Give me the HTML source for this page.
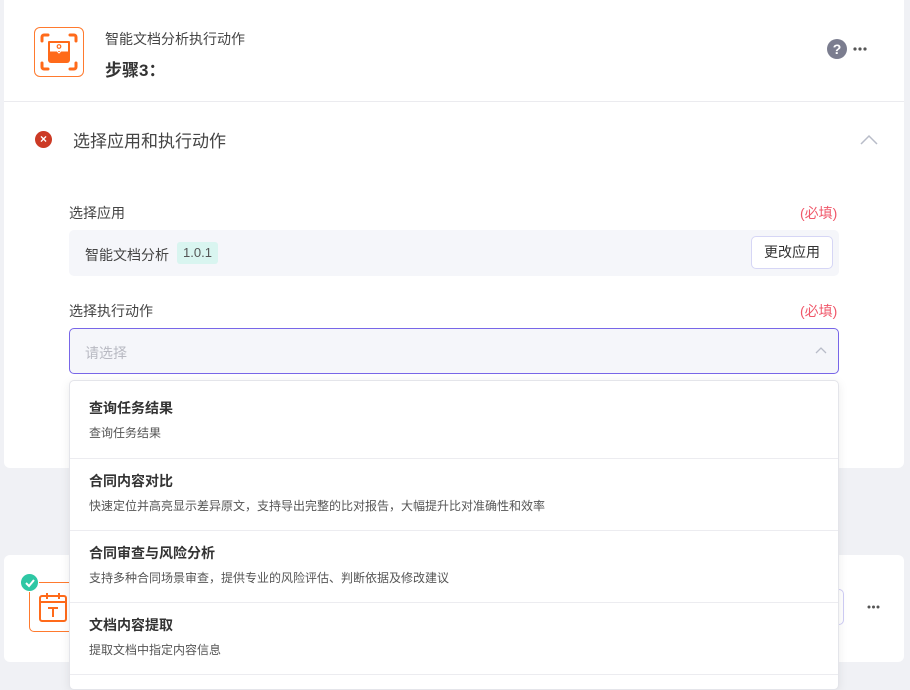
<!DOCTYPE html>
<html><head><meta charset="utf-8"><style>
*{margin:0;padding:0;box-sizing:border-box}
body{width:910px;height:681px;background:#f0f1f5;font-family:"Liberation Sans","Noto Sans CJK SC",sans-serif;position:relative;overflow:hidden;color:#333}
.abs{position:absolute}
.card{position:absolute;background:#fff;border-radius:6px}
</style></head><body>
<div class="card" style="left:4px;top:-6px;width:900px;height:474px"></div>
<div class="card" style="left:4px;top:555px;width:900px;height:107px"></div>

<!-- header icon -->
<div class="abs" style="left:34px;top:27px;width:50px;height:50px;border:1px solid #ff7a2e;border-radius:6px;background:#fff">
<svg width="50" height="50" viewBox="0 0 50 50" style="position:absolute;left:-1px;top:-1px">
<g fill="none" stroke="#ff6a1a" stroke-width="3" stroke-linecap="round">
<path d="M8 14V10a2 2 0 0 1 2-2h4M36 8h4a2 2 0 0 1 2 2v4M42 36v4a2 2 0 0 1-2 2h-4M14 42h-4a2 2 0 0 1-2-2v-4"/></g>
<path d="M15 14h20a1 1 0 0 1 1 1v18a3 3 0 0 1-3 3H17a3 3 0 0 1-3-3V15a1 1 0 0 1 1-1z" fill="#ff6a1a"/>
<rect x="16" y="16" width="18" height="8" fill="#fff"/>
<circle cx="25" cy="19.5" r="1.8" fill="none" stroke="#ff6a1a" stroke-width="1.2"/>
<path d="M16 24h7l2 2 2-2h7" stroke="#fff" fill="none"/>
</svg></div>
<div class="abs" style="left:105px;top:29px;font-size:14px;color:#444">智能文档分析执行动作</div>
<div class="abs" style="left:105px;top:56px;font-size:17px;font-weight:bold;color:#333">步骤3：</div>
<div class="abs" style="left:827px;top:39px;width:20px;height:20px;border-radius:50%;background:#7b7d8f;color:#fff;font-size:14px;font-weight:bold;text-align:center;line-height:20px">?</div>
<svg class="abs" style="left:853px;top:47px" width="14" height="4"><circle cx="2" cy="2" r="1.6" fill="#555"/><circle cx="7" cy="2" r="1.6" fill="#555"/><circle cx="12" cy="2" r="1.6" fill="#555"/></svg>
<div class="abs" style="left:4px;top:101px;width:900px;height:1px;background:#ebebef"></div>

<!-- section -->
<div class="abs" style="left:35px;top:131px;width:17px;height:17px;border-radius:50%;background:#cc3a25;color:#fff;font-size:12px;text-align:center;line-height:17px;font-weight:bold">×</div>
<div class="abs" style="left:73px;top:127px;font-size:17px;color:#444">选择应用和执行动作</div>
<svg class="abs" style="left:860px;top:134px" width="18" height="12"><path d="M1 10L9 2l8 8" stroke="#b8bcc8" stroke-width="1.5" fill="none"/></svg>

<div class="abs" style="left:69px;top:203px;font-size:14px;color:#444">选择应用</div>
<div class="abs" style="left:800px;top:203px;font-size:14px;color:#f0586a">(必填)</div>
<div class="abs" style="left:69px;top:230px;width:770px;height:46px;background:#f5f6fa;border-radius:5px"></div>
<div class="abs" style="left:85px;top:245px;font-size:14px;color:#444">智能文档分析</div>
<div class="abs" style="left:177px;top:242px;width:41px;height:22px;background:#d9f5f0;border-radius:3px;font-size:13px;color:#555;text-align:center;line-height:22px">1.0.1</div>
<div class="abs" style="left:751px;top:236px;width:82px;height:33px;background:#fff;border:1px solid #d6d6f5;border-radius:5px;font-size:14px;color:#333;text-align:center;line-height:31px">更改应用</div>

<div class="abs" style="left:69px;top:301px;font-size:14px;color:#444">选择执行动作</div>
<div class="abs" style="left:800px;top:301px;font-size:14px;color:#f0586a">(必填)</div>
<div class="abs" style="left:69px;top:328px;width:770px;height:46px;background:#f5f6fa;border:1px solid #7866e8;border-radius:5px"></div>
<div class="abs" style="left:85px;top:343px;font-size:14px;color:#b8b9c2">请选择</div>
<svg class="abs" style="left:815px;top:346px" width="12" height="8"><path d="M1 7l5-5 5 5" stroke="#b8bcc8" stroke-width="1.3" fill="none"/></svg>

<!-- second card content -->
<div class="abs" style="left:29px;top:582px;width:50px;height:50px;border:1px solid #ff7a2e;border-radius:5px;background:#fff"></div>
<svg class="abs" style="left:38px;top:591px" width="30" height="32" viewBox="0 0 30 32"><g fill="none" stroke="#ff6a1a" stroke-width="2"><rect x="2" y="5" width="26" height="25" rx="2"/><path d="M2 11h26M9 2v6M21 2v6M10 17h10M15 17v9"/></g></svg>
<div class="abs" style="left:20px;top:573px;width:19px;height:19px;border-radius:50%;background:#2ec7a4;border:1px solid #fff"></div>
<svg class="abs" style="left:24px;top:577px" width="12" height="12"><path d="M2 6l3 3 5-6" stroke="#fff" stroke-width="2" fill="none"/></svg>
<div class="abs" style="left:800px;top:589px;width:44px;height:36px;border:1px solid #cfcdf5;border-left:none;border-radius:0 5px 5px 0"></div>
<svg class="abs" style="left:867px;top:605px" width="13" height="4"><circle cx="2" cy="2" r="1.5" fill="#555"/><circle cx="6.5" cy="2" r="1.5" fill="#555"/><circle cx="11" cy="2" r="1.5" fill="#555"/></svg>

<!-- dropdown -->
<div class="abs" style="left:69px;top:380px;width:770px;height:310px;background:#fff;border:1px solid #e4e5ea;border-radius:5px;box-shadow:0 2px 10px rgba(0,0,0,.08)">
 <div style="height:78px;border-bottom:1px solid #ececf0;padding:17px 0 0 19px"><div style="font-size:14px;font-weight:bold;color:#333">查询任务结果</div><div style="font-size:12px;color:#555;margin-top:6px">查询任务结果</div></div>
 <div style="height:72px;border-bottom:1px solid #ececf0;padding:12px 0 0 19px"><div style="font-size:14px;font-weight:bold;color:#333">合同内容对比</div><div style="font-size:12px;color:#555;margin-top:6px">快速定位并高亮显示差异原文，支持导出完整的比对报告，大幅提升比对准确性和效率</div></div>
 <div style="height:72px;border-bottom:1px solid #ececf0;padding:12px 0 0 19px"><div style="font-size:14px;font-weight:bold;color:#333">合同审查与风险分析</div><div style="font-size:12px;color:#555;margin-top:6px">支持多种合同场景审查，提供专业的风险评估、判断依据及修改建议</div></div>
 <div style="height:72px;border-bottom:1px solid #ececf0;padding:12px 0 0 19px"><div style="font-size:14px;font-weight:bold;color:#333">文档内容提取</div><div style="font-size:12px;color:#555;margin-top:6px">提取文档中指定内容信息</div></div>
</div>
<div class="abs" style="left:904px;top:0;width:6px;height:681px;background:#f0f1f5"></div>
</body></html>
